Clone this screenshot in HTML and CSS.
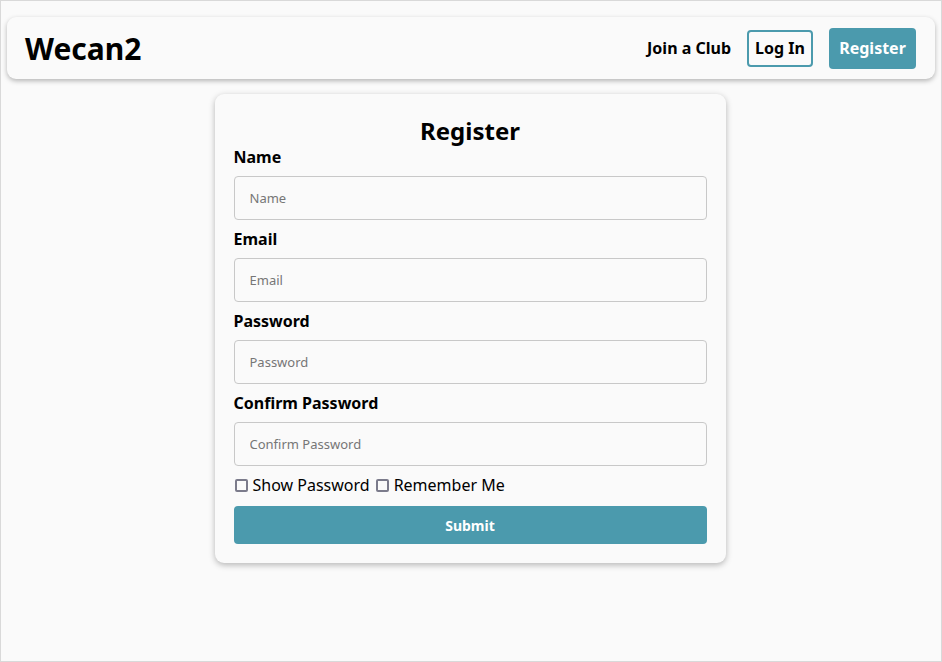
FILE: index.html
```html
<!DOCTYPE html>
<html lang="en">
<head>
<meta charset="utf-8">
<title>Wecan2 - Register</title>
<link rel="stylesheet" href="styles.css">
</head>
<body>
<div class="page">
  <header class="navbar">
    <div class="brand">Wecan2</div>
    <nav class="nav-links">
      <a class="nav-link" href="#">Join a Club</a>
      <a class="btn-outline" href="#">Log In</a>
      <a class="btn-primary" href="#">Register</a>
    </nav>
  </header>
  <main class="content">
    <form class="card">
      <h1 class="card-title">Register</h1>
      <div class="field">
        <label class="field-label">Name</label>
        <input class="field-input" type="text" placeholder="Name">
      </div>
      <div class="field">
        <label class="field-label">Email</label>
        <input class="field-input" type="email" placeholder="Email">
      </div>
      <div class="field">
        <label class="field-label">Password</label>
        <input class="field-input" type="password" placeholder="Password">
      </div>
      <div class="field">
        <label class="field-label">Confirm Password</label>
        <input class="field-input" type="password" placeholder="Confirm Password">
      </div>
      <div class="checks">
        <label class="check"><input type="checkbox" class="check-box">Show Password</label>
        <label class="check"><input type="checkbox" class="check-box">Remember Me</label>
      </div>
      <button type="button" class="submit">Submit</button>
    </form>
  </main>
</div>
</body>
</html>
```

FILE: styles.css
```css
* { box-sizing: border-box; }
html, body { margin: 0; padding: 0; }
body {
  font-family: "Noto Sans", "Open Sans", sans-serif;
  background: #fafafa;
  color: #000;
}
.page {
  min-height: 662px;
  border: 1px solid #d9d9d9;
  padding: 16px 6px 20px 6px;
}
.navbar {
  display: flex;
  align-items: center;
  justify-content: space-between;
  height: 62px;
  padding: 0 19px 0 18px;
  background: #fafafa;
  border-radius: 9px;
  box-shadow: 0 2px 5px rgba(0,0,0,0.28);
}
.brand {
  font-size: 30px;
  font-weight: 700;
  line-height: 1;
  padding-top: 1px;
}
.nav-links {
  display: flex;
  align-items: center;
}
.nav-link {
  color: #000;
  text-decoration: none;
  font-weight: 700;
  font-size: 16px;
  margin-right: 16px;
}
.btn-outline {
  display: flex;
  align-items: center;
  justify-content: center;
  height: 37px;
  width: 66px;
  border: 2px solid #4b9aad;
  border-radius: 4px;
  color: #000;
  text-decoration: none;
  font-weight: 700;
  font-size: 16px;
  margin-right: 16px;
}
.btn-primary {
  display: flex;
  align-items: center;
  justify-content: center;
  height: 41px;
  width: 87px;
  background: #4b9aad;
  border-radius: 4px;
  color: #fff;
  text-decoration: none;
  font-weight: 700;
  font-size: 16px;
}
.content {
  display: flex;
  justify-content: center;
  padding-top: 15px;
  padding-right: 2px;
}
.card {
  width: 511px;
  padding: 20px 19px 19px 19px;
  background: #fafafa;
  border-radius: 9px;
  box-shadow: 0 2px 6px rgba(0,0,0,0.28);
  display: flex;
  flex-direction: column;
}
.card-title {
  margin: 0;
  text-align: center;
  font-size: 24px;
  line-height: 32px;
  font-weight: 700;
  padding-top: 1px;
  height: 32px;
}
.field {
  display: flex;
  flex-direction: column;
  gap: 8px;
  margin-bottom: 8px;
}
.field-label {
  font-size: 16px;
  line-height: 22px;
  font-weight: 700;
}
.field-input {
  height: 44px;
  width: 100%;
  border: 1px solid #c8c8c8;
  border-radius: 4px;
  background: #fafafa;
  padding: 0 15px;
  font-family: "Noto Sans", "Open Sans", sans-serif;
  font-size: 13px;
  color: #000;
}
.field-input::placeholder { color: #767676; }
.checks {
  display: flex;
  gap: 5px;
  font-size: 16px;
  line-height: 22px;
  margin-bottom: 10px;
}
.check {
  display: flex;
  align-items: center;
}
.check-box {
  appearance: none;
  -webkit-appearance: none;
  margin: 0 5px 0 1px;
  width: 13px;
  height: 13px;
  border: 2px solid #7b7b8b;
  border-radius: 2px;
  background: #fafafa;
}
.submit {
  height: 38px;
  border: none;
  border-radius: 4px;
  background: #4b9aad;
  color: #fff;
  font-family: "Noto Sans", "Open Sans", sans-serif;
  font-weight: 700;
  font-size: 14px;
}
```
